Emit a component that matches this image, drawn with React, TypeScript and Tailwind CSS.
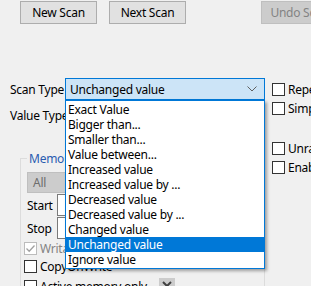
import React from "react";

const scanTypes = [
  "Exact Value",
  "Bigger than...",
  "Smaller than...",
  "Value between...",
  "Increased value",
  "Increased value by ...",
  "Decreased value",
  "Decreased value by ...",
  "Changed value",
  "Unchanged value",
  "Ignore value",
];

function Button({ label, disabled }: { label: string; disabled?: boolean }) {
  return (
    <div
      className={
        "flex h-[23px] w-[77px] shrink-0 items-center justify-center whitespace-nowrap border " +
        (disabled
          ? "border-[#bfbfbf] bg-[#cccccc] text-[#838383]"
          : "border-[#adadad] bg-[#e1e1e1] text-black")
      }
    >
      {label}
    </div>
  );
}

function Check({
  label,
  checked,
  disabled,
}: {
  label: string;
  checked?: boolean;
  disabled?: boolean;
}) {
  return (
    <div className="flex h-[13px] items-center gap-[3px] whitespace-nowrap">
      <div
        className={
          "flex h-[13px] w-[13px] shrink-0 items-center justify-center border bg-white " +
          (disabled ? "border-[#bcbcbc]" : "border-[#333333]")
        }
      >
        {checked && (
          <svg width="11" height="11" viewBox="0 0 11 11">
            <path
              d="M1.5 5.5 L4.2 8.2 L9.5 2.5"
              fill="none"
              stroke={disabled ? "#a0a0a0" : "#222"}
              strokeWidth="1.3"
            />
          </svg>
        )}
      </div>
      <span className={disabled ? "text-[#838383]" : "text-black"}>{label}</span>
    </div>
  );
}

export default function App() {
  return (
    <div
      className="relative h-[286px] w-[311px] overflow-hidden bg-[#f0f0f0] text-[12px] leading-[15px] tracking-[-0.25px] text-black"
      style={{ fontFamily: '"Noto Sans", "Open Sans", sans-serif' }}
    >
      {/* top buttons */}
      <div className="flex pt-[1px]">
        <div className="ml-[20px]">
          <Button label="New Scan" />
        </div>
        <div className="ml-[12px]">
          <Button label="Next Scan" />
        </div>
        <div className="ml-[75px]">
          <Button label="Undo Scan" disabled />
        </div>
      </div>

      <div className="flex">
        {/* left side */}
        <div className="w-[271px] shrink-0">
          <div className="mt-[54px] flex h-[22px] items-center">
            <span className="ml-[10px] w-[55px] shrink-0 whitespace-nowrap">Scan Type</span>
            <div className="flex h-[22px] w-[200px] shrink-0 items-center border border-[#0078d7] bg-[#cce4f7] pl-[4px]">
              <span className="flex-1 whitespace-nowrap">Unchanged value</span>
              <svg width="10" height="6" viewBox="0 0 10 6" className="mr-[7px]">
                <path d="M0.5 0.5 L5 5 L9.5 0.5" fill="none" stroke="#606060" strokeWidth="1" />
              </svg>
            </div>
          </div>
          <div className="mt-[4px] flex h-[22px] items-center">
            <span className="ml-[10px] w-[55px] shrink-0 whitespace-nowrap">Value Type</span>
            <div className="h-[22px] w-[200px] shrink-0 border border-[#adadad] bg-[#e1e1e1]" />
          </div>

          {/* memory scan options group */}
          <div className="relative ml-[20px] mt-[32px] h-[140px] w-[245px] border border-[#dcdcdc]">
            <span className="absolute left-[6px] top-[-8px] whitespace-nowrap bg-[#f0f0f0] px-[2px] text-[#2a5cb0]">
              Memory Scan Options
            </span>
            <div className="ml-[6px] mt-[13px] flex h-[21px] w-[200px] items-center border border-[#bfbfbf] bg-[#cccccc] pl-[5px] text-[#6d6d6d]">
              All
            </div>
            <div className="mt-[1px] flex h-[22px] items-center">
              <span className="ml-[6px] w-[30px] shrink-0">Start</span>
              <div className="h-[22px] w-[150px] border border-[#7a7a7a] bg-white" />
            </div>
            <div className="mt-[1px] flex h-[22px] items-center">
              <span className="ml-[6px] w-[30px] shrink-0">Stop</span>
              <div className="h-[22px] w-[150px] border border-[#7a7a7a] bg-white" />
            </div>
            <div className="ml-[3px] mt-[3px]">
              <Check label="Writable" checked disabled />
            </div>
            <div className="ml-[3px] mt-[5px]">
              <Check label="CopyOnWrite" />
            </div>
            <div className="ml-[3px] mt-[5px] flex items-center">
              <Check label="Active memory only" />
              <div className="ml-[12px] flex h-[16px] w-[16px] shrink-0 items-center justify-center bg-[#cccccc]">
                <svg width="10" height="10" viewBox="0 0 10 10">
                  <path d="M1 1 L9 9 M9 1 L1 9" stroke="#404040" strokeWidth="2" />
                </svg>
              </div>
            </div>
          </div>
        </div>

        {/* right side checkboxes */}
        <div className="ml-[1px] flex flex-col">
          <div className="mt-[59px]">
            <Check label="Repeat" />
          </div>
          <div className="mt-[6px]">
            <Check label="Simple values only" />
          </div>
          <div className="mt-[27px]">
            <Check label="Unrandomizer" />
          </div>
          <div className="mt-[6px]">
            <Check label="Enable Speedhack" />
          </div>
        </div>
      </div>

      {/* open dropdown list */}
      <div className="absolute left-[65px] top-[100px] w-[200px] border border-[#0078d7] bg-white py-[1px] shadow-[2px_2px_3px_rgba(0,0,0,0.35)]">
        {scanTypes.map((t) => (
          <div
            key={t}
            className={
              "h-[15px] whitespace-nowrap pl-[2px] leading-[15px] " +
              (t === "Unchanged value" ? "bg-[#0078d7] text-white" : "text-black")
            }
          >
            {t}
          </div>
        ))}
      </div>
    </div>
  );
}
